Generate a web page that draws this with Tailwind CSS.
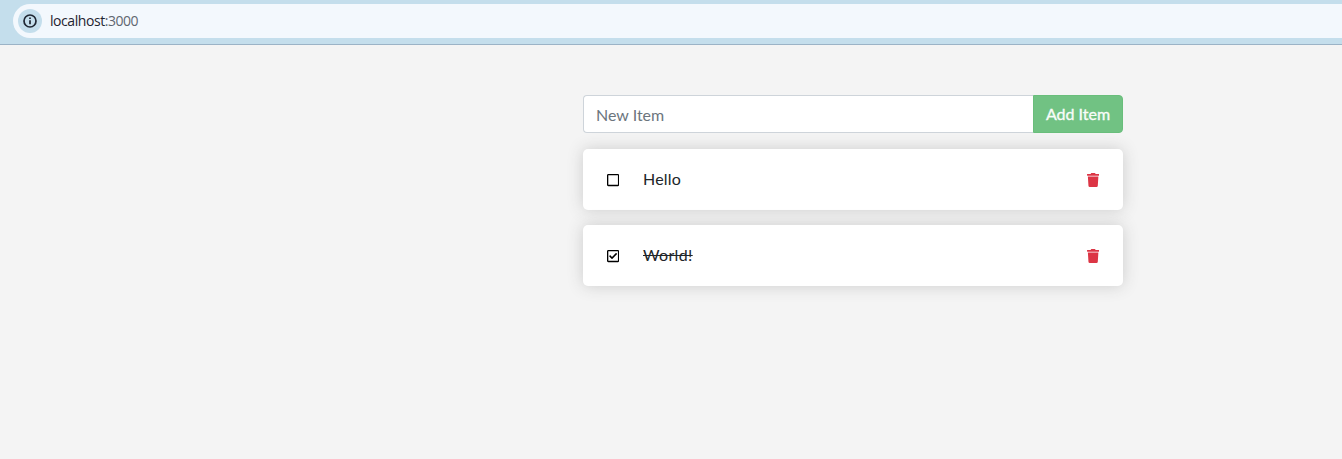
<!DOCTYPE html>
<html lang="en">
<head>
<meta charset="utf-8">
<title>Todo App</title>
<script src="https://cdn.jsdelivr.net/npm/@tailwindcss/browser@4"></script>
</head>
<body class="h-[459px] overflow-hidden bg-[#f4f4f4] font-['Lato',sans-serif] text-base text-[#212529]">
<header class="h-[45px] border-b border-[#9bb3c6] bg-[#c4deec] pl-[13px] pt-1">
  <div class="flex h-[34px] items-center rounded-l-full bg-[#f3f8fd] pl-[5px]">
    <span class="flex size-6 items-center justify-center rounded-full bg-[#c4deec]">
      <svg class="size-[14px]" viewBox="0 0 14 14" fill="none" stroke="#1f2733"><circle cx="7" cy="7" r="6" stroke-width="1.7"/><path d="M7 6.200v4M7 3.500v1.600" stroke-width="1.700"/></svg>
    </span>
    <span class="ml-2 font-['Open_Sans',sans-serif] text-[14px] leading-5 tracking-[-0.44px] text-[#1f2430]">localhost<span class="text-[#5f6670]">:3000</span></span>
  </div>
</header>
<main class="ml-[583px] mt-[50px] w-[540px]">
  <form class="mb-4 flex h-[38px]">
    <div class="flex flex-1 items-center rounded-l border border-r-0 border-[#ced4da] bg-white px-3 pt-0.5 leading-6 text-[#6c757d]">New Item</div>
    <div class="flex w-[90px] items-center justify-center rounded-r border border-[#69be7b] bg-[#71c283] leading-6 text-[#f8fcf9] [-webkit-text-stroke:0.35px_#f8fcf9]">Add Item</div>
  </form>
  <div class="mb-[15px] flex h-[61px] items-center rounded-[5px] bg-white pl-6 pr-6 shadow-[0_0_16px_#ccc]">
    <svg class="h-[14px] w-[12.25px]" viewBox="0 0 448 512" fill="#000"><path d="M400 32H48C21.500 32 0 53.500 0 80v352c0 26.500 21.500 48 48 48h352c26.500 0 48-21.500 48-48V80c0-26.500-21.500-48-48-48zm-6 400H54c-3.300 0-6-2.700-6-6V86c0-3.300 2.700-6 6-6h340c3.300 0 6 2.700 6 6v340c0 3.300-2.700 6-6 6z"/></svg>
    <span class="ml-[23.75px] flex-1 pb-0.5 tracking-[0.2px]">Hello</span>
    <svg class="h-[14px] w-[12.25px]" viewBox="0 0 448 512" fill="#dc3545"><path d="M432 32H312l-9.400-18.700A24 24 0 0 0 281.100 0H166.800a23.720 23.720 0 0 0-21.400 13.300L136 32H16A16 16 0 0 0 0 48v32a16 16 0 0 0 16 16h416a16 16 0 0 0 16-16V48a16 16 0 0 0-16-16zM53.200 467a48 48 0 0 0 47.900 45h245.800a48 48 0 0 0 47.900-45L416 128H32z"/></svg>
  </div>
  <div class="flex h-[61px] items-center rounded-[5px] bg-white pl-6 pr-6 shadow-[0_0_16px_#ccc]">
    <svg class="h-[14px] w-[12.25px]" viewBox="0 0 448 512" fill="#000"><path d="M400 32H48C21.490 32 0 53.490 0 80v352c0 26.510 21.490 48 48 48h352c26.510 0 48-21.490 48-48V80c0-26.510-21.490-48-48-48zm0 400H48V80h352v352zm-35.864-241.724L191.547 361.480c-4.705 4.667-12.303 4.637-16.970-.068l-90.781-91.516c-4.667-4.705-4.637-12.303.069-16.971l22.719-22.536c4.705-4.667 12.303-4.637 16.970.069l59.792 60.277 141.352-140.216c4.705-4.667 12.303-4.637 16.970.068l22.536 22.718c4.667 4.706 4.637 12.304-.068 16.971z"/></svg>
    <span class="ml-[23.75px] flex-1 pb-0.5 tracking-[0.35px] line-through">World!</span>
    <svg class="h-[14px] w-[12.25px]" viewBox="0 0 448 512" fill="#dc3545"><path d="M432 32H312l-9.400-18.700A24 24 0 0 0 281.100 0H166.800a23.720 23.720 0 0 0-21.400 13.300L136 32H16A16 16 0 0 0 0 48v32a16 16 0 0 0 16 16h416a16 16 0 0 0 16-16V48a16 16 0 0 0-16-16zM53.200 467a48 48 0 0 0 47.900 45h245.800a48 48 0 0 0 47.900-45L416 128H32z"/></svg>
  </div>
</main>
</body>
</html>
